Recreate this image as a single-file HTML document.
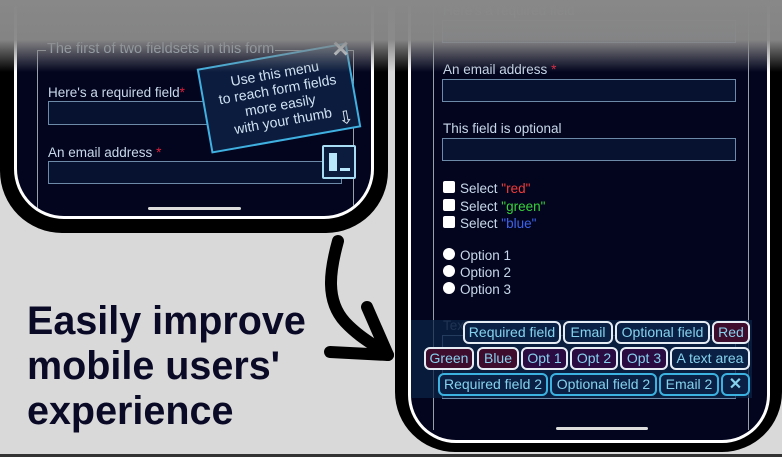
<!DOCTYPE html>
<html><head><style>
*{margin:0;padding:0;box-sizing:border-box}
body{width:782px;height:457px;overflow:hidden;background:#d9d9d9;position:relative;font-family:"Liberation Sans",sans-serif}
.abs{position:absolute}
.phone{position:absolute;background:#000}
.white{position:absolute;border:3px solid #fff;border-top:none;background:#03051f;overflow:hidden}
.lbl{position:absolute;color:#c8d8ea;font-size:13.5px;white-space:nowrap}
.inp{position:absolute;border:1px solid #6d8aa8;background:#071130}
.req{color:#e0203a}
.fs{position:absolute;border:1px solid #9aa0aa}
.chip{position:absolute;height:23px;border:2px solid #e6ecf4;border-radius:6px;background:#0a2145;color:#86d2ee;font-size:14px;line-height:19px;text-align:center;white-space:nowrap}
.c2{border-color:#3cb2e0}
.red{background:#3e0c2c}.pur{background:#2a0b42}
.cb{position:absolute;width:12px;height:12px;background:#fff;border-radius:2px}
.rd{position:absolute;width:12px;height:12px;background:#fff;border-radius:50%}
</style></head><body>

<!-- left phone -->
<div class="phone" style="left:0;top:-40px;width:388px;height:273px;border-radius:0 0 62px 62px"></div>
<div class="white" style="left:14px;top:-40px;width:360px;height:259px;border-radius:0 0 50px 50px">
  <div class="fs" style="left:20px;top:90px;width:317px;height:200px"></div>
  <div class="lbl" style="left:29px;top:81px;background:#03051f;padding:0 1px;color:#a9bccf;font-size:14.5px">The first of two fieldsets in this form</div>
  <div class="lbl" style="left:31px;top:125px">Here's a required field<span class="req">*</span></div>
  <div class="inp" style="left:31px;top:141px;width:294px;height:24px"></div>
  <div class="lbl" style="left:31px;top:185px">An email address <span class="req">*</span></div>
  <div class="inp" style="left:31px;top:201px;width:294px;height:23px"></div>
  <div class="abs" style="left:131px;top:247px;width:93px;height:3px;background:#ddd;border-radius:2px"></div>
</div>
<!-- tooltip -->
<div class="abs" style="left:203px;top:55px;width:152px;height:86px;border:2px solid #3fb0e0;background:#0b1c3e;transform:rotate(-10deg);color:#d0e2f2;font-size:14px;line-height:16px;text-align:center;padding-top:8px">
Use this menu<br>to reach form fields<br>more easily<br>with your thumb
<div class="abs" style="right:-4px;top:-4px;font-size:22px;color:#e8f0f6;font-weight:bold;transform:rotate(10deg)">✕</div>
<div class="abs" style="right:4px;bottom:2px;font-size:18px;color:#dfe8f0">⇩</div>
</div>
<div class="abs" style="left:322px;top:145px;width:34px;height:34px;border:2px solid #a8dcf4;background:#0b1c3e;border-radius:2px">
  <div class="abs" style="left:5px;top:6px;width:8px;height:18px;background:#b8e6fa"></div>
  <div class="abs" style="left:16px;top:21px;width:10px;height:3px;background:#b8e6fa"></div>
</div>

<!-- right phone -->
<div class="phone" style="left:395px;top:-40px;width:387px;height:492px;border-radius:0 0 60px 60px"></div>
<div class="white" style="left:408px;top:-40px;width:362px;height:483px;border-radius:0 0 48px 48px">
  <div class="fs" style="left:22px;top:0;width:316px;height:470px;border-top:none;border-bottom:none"></div>
  <div class="lbl" style="left:32px;top:43px">Here's a required field<span class="req">*</span></div>
  <div class="inp" style="left:31px;top:60px;width:294px;height:23px"></div>
  <div class="lbl" style="left:32px;top:102px">An email address <span class="req">*</span></div>
  <div class="inp" style="left:31px;top:119px;width:294px;height:23px"></div>
  <div class="lbl" style="left:32px;top:161px">This field is optional</div>
  <div class="inp" style="left:31px;top:178px;width:294px;height:23px"></div>
  <div class="cb" style="left:32px;top:221px"></div><div class="lbl" style="left:49px;top:221px">Select <span style="color:#f03a3a">"red"</span></div>
  <div class="cb" style="left:32px;top:239px"></div><div class="lbl" style="left:49px;top:239px">Select <span style="color:#36d23a">"green"</span></div>
  <div class="cb" style="left:32px;top:256px"></div><div class="lbl" style="left:49px;top:256px">Select <span style="color:#3d63e8">"blue"</span></div>
  <div class="rd" style="left:32px;top:288px"></div><div class="lbl" style="left:49px;top:288px">Option 1</div>
  <div class="rd" style="left:32px;top:305px"></div><div class="lbl" style="left:49px;top:305px">Option 2</div>
  <div class="rd" style="left:32px;top:322px"></div><div class="lbl" style="left:49px;top:322px">Option 3</div>
  <div class="lbl" style="left:32px;top:358px;color:#55667a">Text</div>
  <div class="inp" style="left:31px;top:375px;width:294px;height:64px"></div>
  <div class="abs" style="left:145px;top:467px;width:92px;height:3px;background:#ddd;border-radius:2px"></div>
</div>
<div class="abs" style="left:411px;top:320px;width:341px;height:78px;background:rgba(12,35,70,.75)"></div>
<div class="chip" style="left:463px;top:321px;width:98px">Required field</div>
<div class="chip" style="left:563px;top:321px;width:50px">Email</div>
<div class="chip" style="left:615px;top:321px;width:95px">Optional field</div>
<div class="chip red" style="left:712px;top:321px;width:38px">Red</div>
<div class="chip red" style="left:424px;top:347px;width:50px">Green</div>
<div class="chip red" style="left:477px;top:347px;width:42px">Blue</div>
<div class="chip pur" style="left:521px;top:347px;width:47px">Opt 1</div>
<div class="chip pur" style="left:570px;top:347px;width:48px">Opt 2</div>
<div class="chip pur" style="left:620px;top:347px;width:48px">Opt 3</div>
<div class="chip" style="left:670px;top:347px;width:80px">A text area</div>
<div class="chip c2" style="left:438px;top:373px;width:110px">Required field 2</div>
<div class="chip c2" style="left:550px;top:373px;width:107px">Optional field 2</div>
<div class="chip c2" style="left:659px;top:373px;width:60px">Email 2</div>
<div class="chip c2" style="left:721px;top:373px;width:29px;font-weight:bold;font-size:16px">✕</div>

<!-- gradient overlay -->
<div class="abs" style="left:0;top:0;width:782px;height:75px;background:linear-gradient(to bottom,rgba(136,136,136,1) 0,rgba(136,136,136,.97) 40px,rgba(136,136,136,0) 72px)"></div>

<!-- arrow -->
<svg class="abs" style="left:0;top:0" width="782" height="457">
<path d="M338 241 C330 270 325 300 345 322 C360 338 375 345 388 355" fill="none" stroke="#000" stroke-width="12" stroke-linecap="round"/>
<path d="M367 307 L388 355 L330 352" fill="none" stroke="#000" stroke-width="12" stroke-linecap="round" stroke-linejoin="round"/>
</svg>

<div class="abs" style="left:27px;top:299px;font-size:39.5px;font-weight:bold;line-height:45px;color:#0a0a26">Easily improve<br>mobile users'<br>experience</div>
<div class="abs" style="left:0;top:454px;width:782px;height:3px;background:#333"></div>
</body></html>
